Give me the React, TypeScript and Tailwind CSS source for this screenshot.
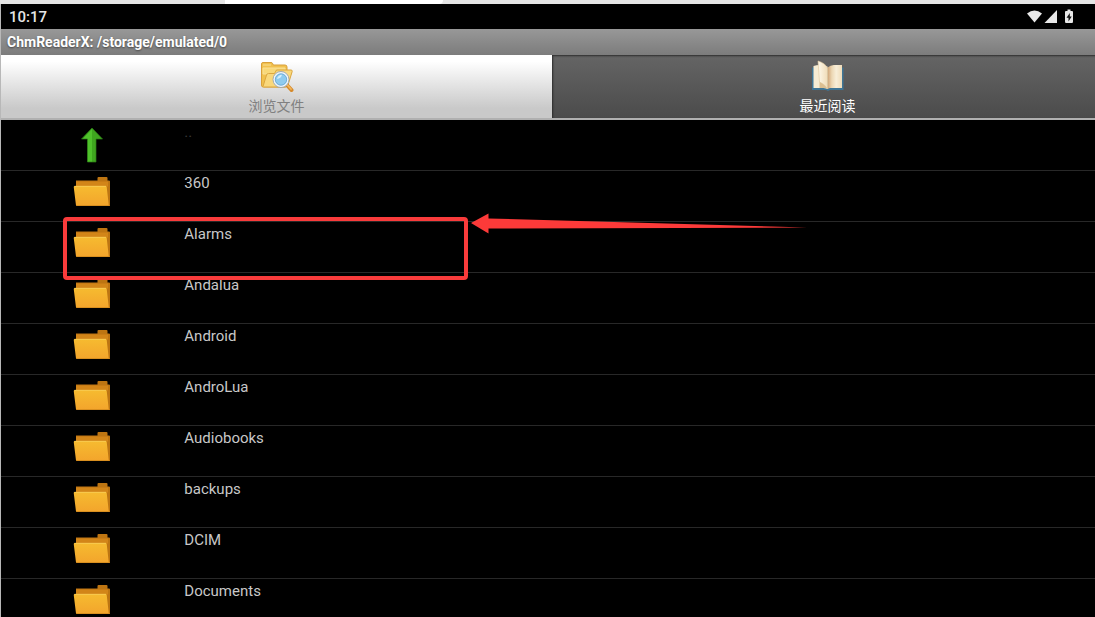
import { useState } from 'react';

type Entry = {
  name: string;
  kind: 'up' | 'folder';
  marked?: boolean;
};

const entries: Entry[] = [
  { name: '..', kind: 'up' },
  { name: '360', kind: 'folder' },
  { name: 'Alarms', kind: 'folder', marked: true },
  { name: 'Andalua', kind: 'folder' },
  { name: 'Android', kind: 'folder' },
  { name: 'AndroLua', kind: 'folder' },
  { name: 'Audiobooks', kind: 'folder' },
  { name: 'backups', kind: 'folder' },
  { name: 'DCIM', kind: 'folder' },
  { name: 'Documents', kind: 'folder' },
];

function UpIcon() {
  return (
    <svg width="38" height="36" viewBox="0 0 38 36" aria-hidden="true">
      <path d="M19 1 29.5 12H23v23h-8.500V12H8.500Z" fill="#3fa61f" />
      <path d="M19 2v33h-4.500V12H9.500Z" fill="#4fc22b" />
      <path d="M19 1 29.500 12H23v23h-8.500V12H8.500Z" fill="none" stroke="#2c7d16" strokeWidth="0.7" />
    </svg>
  );
}

function FolderIcon() {
  return (
    <svg width="38" height="32" viewBox="0 0 38 32" aria-hidden="true">
      <defs>
        <linearGradient id="folder-front" x1="0" y1="0" x2="0" y2="1">
          <stop offset="0" stopColor="#f6bb30" />
          <stop offset="1" stopColor="#f3a52c" />
        </linearGradient>
      </defs>
      <path d="M3 4.500h21.500V2q0-1 1-1h8q1 0 1 1v2.500h1.500q1 0 1 1V30H4L3 12Z" fill="#bd7512" />
      <path d="M3 5.500h32v5H3Z" fill="#d28518" />
      <path d="M1.500 10h31q1 0 1.200 1L35.800 29.500H3L.8 11.500q-.2-1.500.7-1.500Z" fill="url(#folder-front)" />
      <path d="M1.500 10.300h31.500" stroke="#f9cf5c" strokeWidth="0.8" />
      <path d="M3 29.500H36.500" stroke="#d98f20" strokeWidth="0.8" />
    </svg>
  );
}

function BrowseIcon() {
  return (
    <svg width="34" height="32" viewBox="0 0 34 32" aria-hidden="true">
      <path
        d="M1.500 25V4q0-1.500 1.500-1.500h8q1.300 0 1.800 1.300l.5 1.200H25q2 0 2 2v18q0 2-2 2H3q-1.500 0-1.500-2Z"
        fill="#f1c14e"
        stroke="#d9a03a"
      />
      <path d="M3 5h8M3 8h22v6H3Z" fill="#f8d878" stroke="#f9df96" />
      <path
        d="M3 26.500 6.500 15q.4-1.500 2-1.500h6l2-3.500H31q1.500 0 1.200 1.500L28 25q-.5 2-2.500 2H3.500Z"
        fill="#f9d87c"
        stroke="#dba63f"
      />
      <path d="m26 24 5.500 6" stroke="#d68a2b" strokeWidth="4" strokeLinecap="round" />
      <path d="m26.500 24 4.500 5" stroke="#f3b75b" strokeWidth="1.800" strokeLinecap="round" />
      <circle cx="21" cy="19.500" r="7" fill="#8fcbee" stroke="#f0f5f9" strokeWidth="2" />
      <circle cx="21" cy="19.500" r="8" fill="none" stroke="#8f9cab" strokeWidth="0.800" />
      <circle cx="21" cy="19.500" r="5.700" fill="none" stroke="#5b9fd0" strokeWidth="0.700" />
      <path d="M17 19q.8-4 5-4.200-1 3.700-5 4.200Z" fill="#d4eefb" />
    </svg>
  );
}

function BookIcon() {
  return (
    <svg width="34" height="32" viewBox="0 0 34 32" aria-hidden="true">
      <defs>
        <linearGradient id="page-right" x1="0" y1="0" x2="1" y2="0">
          <stop offset="0" stopColor="#cda274" />
          <stop offset="0.3" stopColor="#ecd7b4" />
          <stop offset="0.6" stopColor="#f8eed8" />
          <stop offset="1" stopColor="#efdcba" />
        </linearGradient>
        <linearGradient id="page-turning" x1="0" y1="0" x2="1" y2="0">
          <stop offset="0" stopColor="#fdf8ea" />
          <stop offset="1" stopColor="#f0dcb8" />
        </linearGradient>
      </defs>
      <path d="M1 7.500h31.500V30H19l-2 1-2-1H1Z" fill="#3f7595" />
      <path d="M2.500 6Q9 4 16.500 6.500V29q-2-1-4-1h-10Z" fill="#f6ecd3" />
      <path d="M16.500 7.500Q20 4.500 24 5h7v23H19l-2.500 1Z" fill="url(#page-right)" />
      <path d="M7 1Q14 3 16.500 8v21Q14 24 8.500 22Z" fill="url(#page-turning)" stroke="#dfc79e" strokeWidth="0.600" />
      <path d="M8.500 22q5 2 8 7-1-1-4-1H8.500Z" fill="#dcbf91" />
    </svg>
  );
}

function StatusBar() {
  return (
    <div className="flex h-[25px] shrink-0 items-center justify-between bg-black pr-5 pl-2">
      <span className="text-[15px] leading-6 font-medium text-[#e6e6e6]">10:17</span>
      <svg width="48" height="16" viewBox="0 0 48 16" fill="#e8e8e8" aria-label="Wi-Fi, signal, battery charging">
        <path d="M0 4.500Q7.500-1.500 15 4.500L7.500 13.500Z" />
        <path d="M30 1v13H17.500Z" />
        <path d="M40.500.5h3V2H45q1 0 1 1v9.500q0 1.500-1 1.500h-6q-1 0-1-1.500V3q0-1 1-1h1.500Z" />
        <path d="m42.800 4-3.300 4.800H41.500v3.700l3.200-5H42.800Z" fill="#111" />
      </svg>
    </div>
  );
}

function Marker() {
  return (
    <div className="pointer-events-none absolute -top-[9px] left-[62px] z-10 flex items-start gap-[3px]">
      <div className="mt-1 h-[63px] w-[405px] rounded border-4 border-[#f93b3b]" />
      <svg width="336" height="22" viewBox="0 0 336 22" aria-hidden="true">
        <path d="M0 10 17.500.5v5L336 14.500 17.500 15.500v5Z" fill="#fc3a39" />
      </svg>
    </div>
  );
}

const tabs = [
  { id: 'browse', label: '浏览文件', icon: <BrowseIcon /> },
  { id: 'recent', label: '最近阅读', icon: <BookIcon /> },
];

export default function App() {
  const [tab, setTab] = useState('browse');

  return (
    <div className="flex h-screen flex-col overflow-hidden bg-black font-['Roboto','Noto_Sans_CJK_SC',sans-serif]">
      <div className="flex h-1 shrink-0 bg-[#e5e5e5]">
        <div className="ml-[225px] w-[218px] rounded-br bg-white" />
      </div>

      <div className="flex min-h-0 flex-1 flex-col border-l border-[#b8b8b8]">
        <StatusBar />
        <header className="h-[26px] shrink-0 bg-linear-to-b from-[#989898] to-[#7c7c7c] px-1.5">
          <h1 className="text-sm leading-[26px] font-bold text-white [text-shadow:0_1px_2px_#444]">
            ChmReaderX: /storage/emulated/0
          </h1>
        </header>

        {/* the two tabs are a little wider together than the window */}
        <div role="tablist" className="flex h-[65px] shrink-0 overflow-hidden border-b-2 border-[#b0b0b0]">
          {tabs.map((item) => {
            const active = item.id === tab;
            return (
              <button
                key={item.id}
                type="button"
                role="tab"
                aria-selected={active}
                onClick={() => setTab(item.id)}
                className={`flex w-[calc(50%+4px)] shrink-0 flex-col items-center pt-[5px] text-sm leading-5 ${
                  active
                    ? 'bg-linear-to-b from-white from-10% to-[#c9c9c9] to-85% text-[#808080]'
                    : 'bg-linear-to-b from-[#656565] to-[#4b4b4b] text-white shadow-[inset_1px_1px_2px_#2c2c2c]'
                }`}
              >
                {item.icon}
                <span className="mt-1">{item.label}</span>
              </button>
            );
          })}
        </div>

        <ul className="min-h-0 flex-1">
          {entries.map((entry) => (
            <li key={entry.name} className="relative border-b border-[#282828]">
              <button type="button" className="flex h-[50px] w-full items-start text-left">
                <span className="flex w-1/6 justify-center pt-[5px] pr-px">
                  {entry.kind === 'up' ? (
                    <span className="pt-0.5">
                      <UpIcon />
                    </span>
                  ) : (
                    <FolderIcon />
                  )}
                </span>
                <span
                  className={`pl-px text-[15px] leading-6 ${
                    entry.kind === 'up' ? 'text-[#3a3a3a]' : 'text-[#c8c8c8]'
                  }`}
                >
                  {entry.name}
                </span>
              </button>
              {entry.marked && <Marker />}
            </li>
          ))}
        </ul>
      </div>
    </div>
  );
}
